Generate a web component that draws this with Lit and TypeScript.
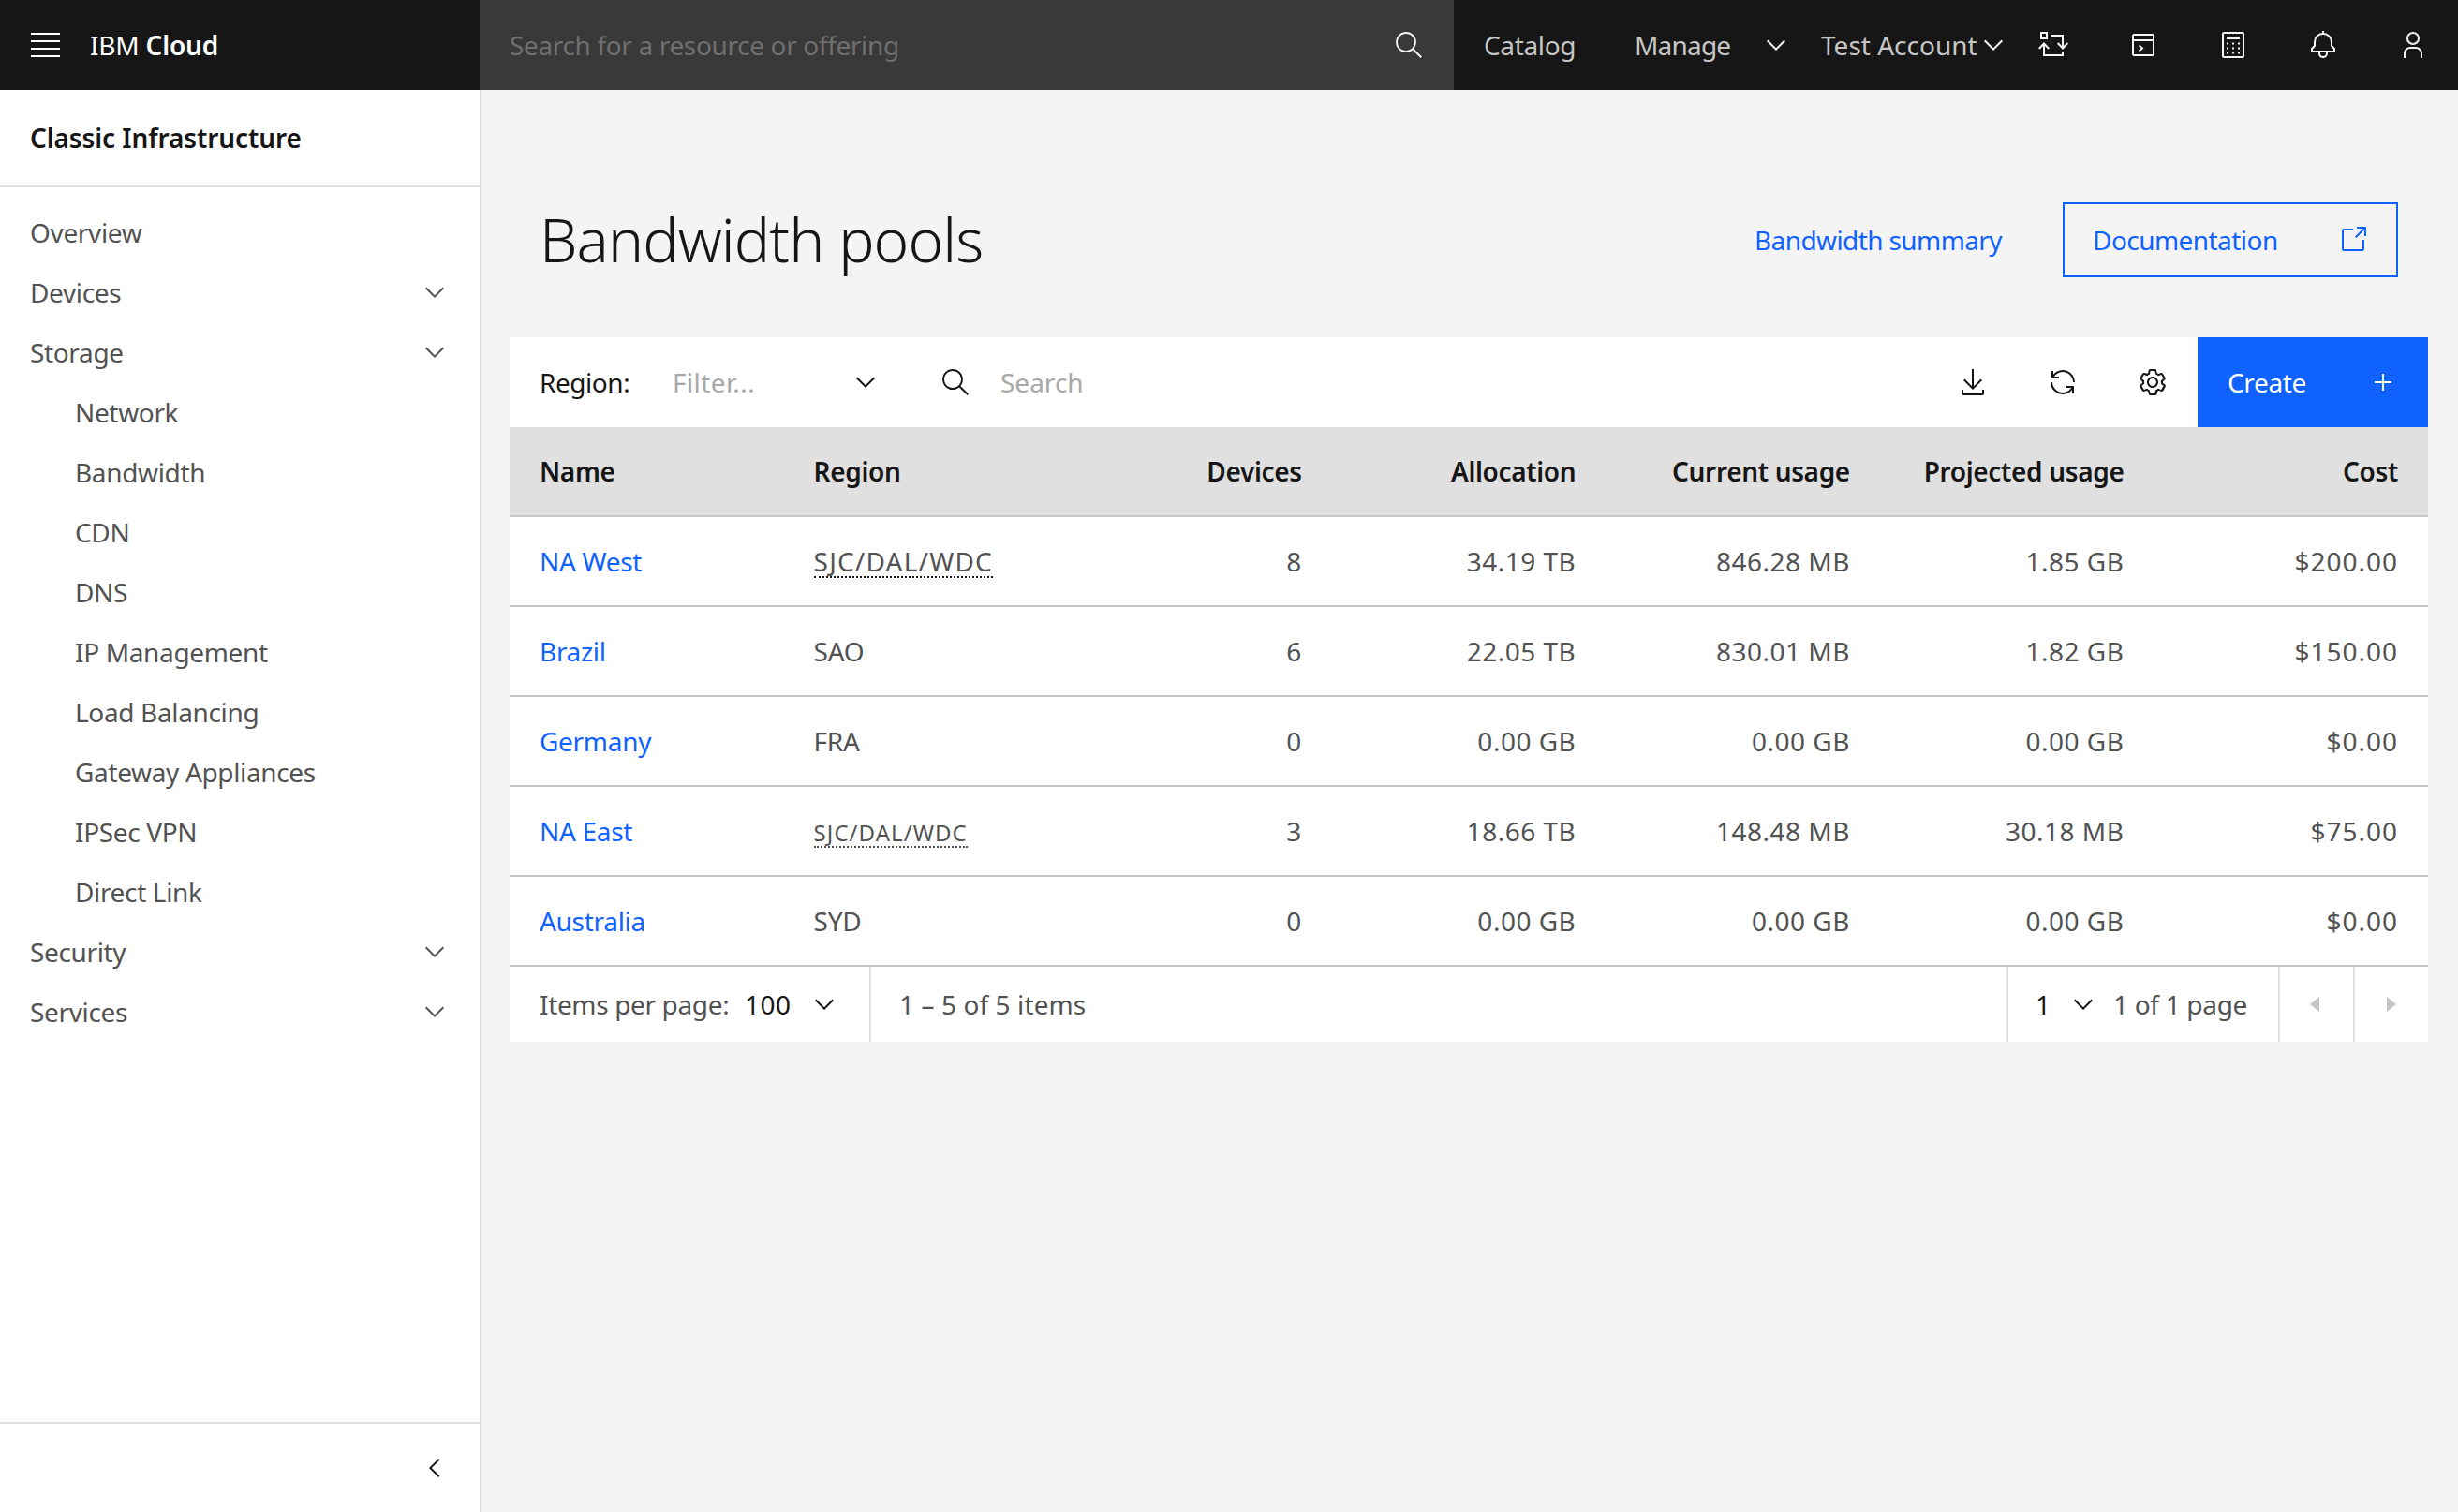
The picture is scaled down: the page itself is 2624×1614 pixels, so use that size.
import { css, html, LitElement, svg } from "lit";
import { customElement } from "lit/decorators.js";

const chevronDown = svg`<path d="M16 22L6 12l1.4-1.4 8.6 8.6 8.6-8.6L26 12z"></path>`;
const chevronLeft = svg`<path d="M10 16l10-10 1.4 1.4L12.8 16l8.6 8.6L20 26z"></path>`;
const search = svg`<path d="M30 28.6L21.4 20c3.8-4.6 3.2-11.6-1.4-15.4S8.4 1.4 4.6 6 1.4 17.6 6 21.4c4 3.4 10 3.4 14 0l8.6 8.6 1.4-1.4zM4 13C4 8 8 4 13 4s9 4 9 9-4 9-9 9-9-4-9-9z"></path>`;
const launch = svg`<path d="M26 28H6c-1.2 0-2-.8-2-2V6c0-1.2.8-2 2-2h10v2H6v20h20V16h2v10c0 1.2-.8 2-2 2z"></path><path d="M20 2v2h6.6L18 12.6l1.4 1.4L28 5.4V12h2V2z"></path>`;
const download = svg`<path d="M26 14l-1.4-1.4-7.6 7.6V2h-2v18.2l-7.6-7.6L6 14l10 10z"></path><path d="M26 24v4H6v-4H4v4c0 1.2.8 2 2 2h20c1.2 0 2-.8 2-2v-4z"></path>`;
const renew = svg`<path d="M12 10H6.78A11 11 0 0 1 27 16h2A13 13 0 0 0 6 7.68V4H4v8h8z"></path><path d="M20 22h5.22A11 11 0 0 1 5 16H3a13 13 0 0 0 23 8.32V28h2v-8h-8z"></path>`;
const settings = svg`<g transform="scale(2)"><path d="M13.5,8.4c0-0.1,0-0.3,0-0.4c0-0.1,0-0.3,0-0.4l1-0.8c0.4-0.3,0.4-0.9,0.2-1.3l-1.2-2C13.3,3.2,13,3,12.6,3c-0.1,0-0.2,0-0.3,0.1l-1.2,0.4c-0.2-0.1-0.4-0.3-0.7-0.4l-0.3-1.3C10.1,1.3,9.7,1,9.2,1H6.8c-0.5,0-0.9,0.3-1,0.8L5.6,3.1C5.3,3.2,5.1,3.3,4.9,3.4L3.7,3C3.6,3,3.5,3,3.4,3C3,3,2.7,3.2,2.5,3.5l-1.2,2C1.1,5.9,1.2,6.4,1.6,6.8l0.9,0.9c0,0.1,0,0.3,0,0.4c0,0.1,0,0.3,0,0.4l-1,0.8c-0.4,0.3-0.5,0.9-0.2,1.3l1.2,2C2.7,12.8,3,13,3.4,13c0.1,0,0.2,0,0.3-0.1l1.2-0.4c0.2,0.1,0.4,0.3,0.7,0.4l0.3,1.3c0.1,0.5,0.5,0.8,1,0.8h2.4c0.5,0,0.9-0.3,1-0.8l0.3-1.3c0.2-0.1,0.4-0.2,0.7-0.4l1.2,0.4c0.1,0,0.2,0.1,0.3,0.1c0.4,0,0.7-0.2,0.9-0.5l1.1-2c0.2-0.4,0.2-0.9-0.2-1.2L13.5,8.4z M12.6,12l-1.7-0.6c-0.4,0.3-0.9,0.6-1.4,0.8L9.2,14H6.8l-0.4-1.8c-0.5-0.2-0.9-0.5-1.4-0.8L3.4,12l-1.2-2l1.4-1.2c-0.1-0.5-0.1-1.1,0-1.6L2.2,6l1.2-2l1.7,0.6C5.5,4.2,6,4,6.5,3.8L6.8,2h2.4l0.4,1.8c0.5,0.2,0.9,0.5,1.4,0.8L12.6,4l1.2,2l-1.4,1.2c0.1,0.5,0.1,1.1,0,1.6l1.4,1.2L12.6,12z"></path><path d="M8,11c-1.7,0-3-1.3-3-3s1.3-3,3-3s3,1.3,3,3C11,9.6,9.7,11,8,11z M8,6C6.9,6,6,6.9,6,8c0,1.1,0.9,2,2,2c1.1,0,2-0.9,2-2C10,6.9,9.1,6,8,6z"></path></g>`;
const add = svg`<path d="M17 15V7h-2v8H7v2h8v8h2v-8h8v-2z"></path>`;
const caretLeft = svg`<path d="M20 24L10 16 20 8z"></path>`;
const caretRight = svg`<path d="M12 8l10 8-10 8z"></path>`;
const menu = svg`<path d="M1 3h31v2H1zM1 11h31v2H1zM1 19h31v2H1zM1 27h31v2H1z"></path>`;
const transfer = svg`<g class="line"><rect x="3" y="3" width="6" height="6"></rect><path d="M13 6h13v13M20.700 14l5.300 5.500 5.300-5.500M.8 20l5.200-5.500 5.200 5.500M6 15v12h20v-4"></path></g>`;
const terminal = svg`<g class="line"><rect x="5" y="5" width="22" height="22" rx="1"></rect><path d="M5 11h22M11.500 16.500l3.500 3-3.500 3"></path></g>`;
const calculator = svg`<rect class="line" x="5" y="3" width="22" height="26" rx="1"></rect><path d="M9 7h14v3H9zM9 13.500h2v2H9zM15 13.500h2v2h-2zM21 13.500h2v2h-2zM9 18.500h2v2H9zM15 18.500h2v2h-2zM21 18.500h2v2h-2zM9 23.500h2v2H9zM15 23.500h2v2h-2zM21 23.500h2v2h-2z"></path>`;
const bell = svg`<path d="M28.7071,19.293,26,16.5859V13a10.0136,10.0136,0,0,0-9-9.9492V1H15V3.0508A10.0136,10.0136,0,0,0,6,13v3.5859L3.2929,19.293A1,1,0,0,0,3,20v3a1,1,0,0,0,1,1h7v.7768a5.152,5.152,0,0,0,4.5,5.1987A5.0057,5.0057,0,0,0,21,25V24h7a1,1,0,0,0,1-1V20A1,1,0,0,0,28.7071,19.293ZM19,25a3,3,0,0,1-6,0V24h6Zm8-3H5V20.4141L7.707,17.707A1,1,0,0,0,8,17V13a8,8,0,0,1,16,0v4a1,1,0,0,0,.293.707L27,20.4141Z"></path>`;
const user = svg`<path d="M16,4a5,5,0,1,1-5,5,5,5,0,0,1,5-5m0-2a7,7,0,1,0,7,7A7,7,0,0,0,16,2Z"></path><path d="M26,30H24V25a5,5,0,0,0-5-5H13a5,5,0,0,0-5,5v5H6V25a7,7,0,0,1,7-7h6a7,7,0,0,1,7,7Z"></path>`;

const icon = (body: unknown) =>
	html`<svg class="icon" viewBox="0 0 32 32" aria-hidden="true">${body}</svg>`;

const sideItems = [
	{ label: "Overview" },
	{ label: "Devices", more: true },
	{ label: "Storage", more: true },
	{ label: "Network", sub: true },
	{ label: "Bandwidth", sub: true },
	{ label: "CDN", sub: true },
	{ label: "DNS", sub: true },
	{ label: "IP Management", sub: true },
	{ label: "Load Balancing", sub: true },
	{ label: "Gateway Appliances", sub: true },
	{ label: "IPSec VPN", sub: true },
	{ label: "Direct Link", sub: true },
	{ label: "Security", more: true },
	{ label: "Services", more: true },
];

const columns = ["Name", "Region", "Devices", "Allocation", "Current usage", "Projected usage", "Cost"];

const rows = [
	{ name: "NA West", region: "SJC/DAL/WDC", hint: "big", cells: ["8", "34.19 TB", "846.28 MB", "1.85 GB", "$200.00"] },
	{ name: "Brazil", region: "SAO", hint: "", cells: ["6", "22.05 TB", "830.01 MB", "1.82 GB", "$150.00"] },
	{ name: "Germany", region: "FRA", hint: "", cells: ["0", "0.00 GB", "0.00 GB", "0.00 GB", "$0.00"] },
	{ name: "NA East", region: "SJC/DAL/WDC", hint: "small", cells: ["3", "18.66 TB", "148.48 MB", "30.18 MB", "$75.00"] },
	{ name: "Australia", region: "SYD", hint: "", cells: ["0", "0.00 GB", "0.00 GB", "0.00 GB", "$0.00"] },
];

@customElement("app-root")
export class AppRoot extends LitElement {
	static override styles = css`
		:host {
			display: block;
			min-height: 1614px;
			background: #f4f4f4;
			color: #161616;
			font-family: "Noto Sans", "Liberation Sans", sans-serif;
			font-size: 28px;
			letter-spacing: -0.35px;
			white-space: nowrap;
		}

		.icon {
			width: 32px;
			height: 32px;
			flex: none;
			fill: currentColor;
			display: block;
		}

		.line {
			fill: none;
			stroke: currentColor;
			stroke-width: 2;
		}

		/* top bar */
		.topbar {
			display: flex;
			height: 96px;
			background: #161616;
			color: #c6c6c6;
		}

		.brand {
			width: 512px;
			display: flex;
			align-items: center;
			gap: 32px;
			padding-left: 32px;
			box-sizing: border-box;
			color: #fff;
			letter-spacing: -0.2px;
		}

		.brand b {
			font-weight: 600;
		}

		.global-search {
			width: 1040px;
			background: #393939;
			display: flex;
			align-items: center;
			justify-content: space-between;
			padding: 0 32px;
			box-sizing: border-box;
			color: #6f6f6f;
		}

		.global-search .icon {
			color: #f4f4f4;
		}

		.nav-item {
			display: flex;
			align-items: center;
			justify-content: space-between;
			box-sizing: border-box;
		}

		.nav-item .icon {
			color: #f4f4f4;
		}

		.catalog {
			width: 193px;
			padding-left: 32px;
		}

		.manage {
			width: 199px;
			padding-right: 32px;
			letter-spacing: -0.8px;
		}

		.account {
			width: 200px;
			letter-spacing: 0;
		}

		.top-icon {
			width: 96px;
			display: flex;
			align-items: center;
			justify-content: center;
			color: #f4f4f4;
		}

		/* page */
		.body {
			display: flex;
			min-height: 1518px;
		}

		.sidebar {
			width: 514px;
			flex: none;
			box-sizing: border-box;
			background: #fff;
			border-right: 2px solid #e0e0e0;
			display: flex;
			flex-direction: column;
			color: #525252;
		}

		.side-title {
			height: 104px;
			box-sizing: border-box;
			border-bottom: 2px solid #e0e0e0;
			display: flex;
			align-items: center;
			padding: 0 32px;
			font-weight: 600;
			color: #161616;
			letter-spacing: -0.1px;
		}

		.side-nav {
			flex: 1;
			padding-top: 16px;
		}

		.side-item {
			height: 64px;
			display: flex;
			align-items: center;
			justify-content: space-between;
			padding: 0 32px;
		}

		.side-item.sub {
			padding-left: 80px;
		}

		.side-foot {
			height: 94px;
			border-top: 2px solid #e0e0e0;
			display: flex;
			align-items: center;
			justify-content: flex-end;
			padding-right: 32px;
			color: #161616;
		}

		.main {
			flex: 1;
			min-width: 0;
			padding: 120px 32px 0 30px;
		}

		.title-row {
			height: 80px;
			display: flex;
			align-items: center;
			padding: 0 32px;
			margin-bottom: 64px;
		}

		h1 {
			margin: 0;
			flex: 1;
			font-size: 64px;
			font-weight: 300;
			letter-spacing: -0.9px;
			line-height: 80px;
		}

		.link {
			color: #0f62fe;
			text-decoration: none;
		}

		.title-row .link {
			margin-right: 65px;
			letter-spacing: -0.6px;
		}

		.doc-button {
			width: 358px;
			height: 80px;
			box-sizing: border-box;
			border: 2px solid #0f62fe;
			color: #0f62fe;
			display: flex;
			align-items: center;
			justify-content: space-between;
			padding: 0 30px;
			letter-spacing: -0.55px;
		}

		/* table */
		.toolbar {
			height: 96px;
			background: #fff;
			display: flex;
			align-items: center;
			padding-left: 32px;
		}

		.region-label {
			width: 142px;
			letter-spacing: -0.45px;
		}

		.filter {
			width: 222px;
			display: flex;
			align-items: center;
			justify-content: space-between;
			color: #a8a8a8;
			letter-spacing: 0.4px;
		}

		.filter .icon {
			color: #161616;
		}

		.table-search {
			margin-left: 64px;
			display: flex;
			align-items: center;
			gap: 32px;
			color: #a8a8a8;
			flex: 1;
			letter-spacing: 0;
		}

		.table-search .icon {
			color: #161616;
		}

		.tool {
			width: 96px;
			height: 96px;
			display: flex;
			align-items: center;
			justify-content: center;
		}

		.create {
			width: 246px;
			height: 96px;
			box-sizing: border-box;
			background: #0f62fe;
			color: #fff;
			display: flex;
			align-items: center;
			justify-content: space-between;
			padding: 0 32px;
		}

		.row {
			display: grid;
			grid-template-columns: repeat(7, 1fr);
			height: 96px;
			box-sizing: border-box;
			background: #fff;
			border-bottom: 2px solid #c6c6c6;
			color: #525252;
			align-items: center;
		}

		.row.head {
			background: #e0e0e0;
			color: #161616;
			font-weight: 600;
		}

		.cell {
			padding: 0 32px;
			text-align: right;
			letter-spacing: 0.5px;
		}

		.cell:last-child {
			letter-spacing: 1px;
		}

		.row.head .cell {
			letter-spacing: -0.35px;
		}

		.cell.left {
			text-align: left;
			letter-spacing: -0.3px;
		}

		.hint {
			border-bottom: 2px dotted #161616;
			display: inline-block;
			line-height: 32px;
			letter-spacing: 1.2px;
		}

		.hint.small {
			font-size: 24px;
			border-bottom-color: #525252;
			line-height: 28px;
			letter-spacing: 1.05px;
		}

		.pager {
			height: 80px;
			background: #fff;
			display: flex;
			color: #525252;
		}

		.pager-section {
			display: flex;
			align-items: center;
			box-sizing: border-box;
		}

		.per-page {
			width: 386px;
			padding-left: 32px;
			border-right: 2px solid #e0e0e0;
		}

		.per-page .label {
			width: 219px;
		}

		.value {
			color: #161616;
			letter-spacing: 0.5px;
		}

		.per-page .value {
			width: 69px;
		}

		.per-page .icon,
		.pages .icon {
			color: #161616;
		}

		.range {
			flex: 1;
			padding-left: 30px;
			letter-spacing: 0.1px;
		}

		.pages {
			width: 290px;
			border-left: 2px solid #e0e0e0;
			padding-left: 29px;
		}

		.pages .value {
			width: 35px;
		}

		.pages .label {
			margin-left: 16px;
			letter-spacing: -0.3px;
		}

		.step {
			width: 80px;
			border-left: 2px solid #e0e0e0;
			justify-content: center;
			padding-right: 2px;
		}

		.step .icon {
			color: #c6c6c6;
		}
	`;

	override render() {
		return html`
			<header class="topbar">
				<div class="brand">
					${icon(menu)}
					<span>IBM <b>Cloud</b></span>
				</div>
				<div class="global-search">
					<span>Search for a resource or offering</span>
					${icon(search)}
				</div>
				<div class="nav-item catalog">Catalog</div>
				<div class="nav-item manage">Manage ${icon(chevronDown)}</div>
				<div class="nav-item account">Test Account ${icon(chevronDown)}</div>
				${[transfer, terminal, calculator, bell, user].map(
					(i) => html`<div class="top-icon">${icon(i)}</div>`
				)}
			</header>
			<div class="body">
				<aside class="sidebar">
					<div class="side-title">Classic Infrastructure</div>
					<nav class="side-nav">
						${sideItems.map(
							(item) => html`
								<div class="side-item ${item.sub ? "sub" : ""}">
									<span>${item.label}</span>
									${item.more ? icon(chevronDown) : ""}
								</div>
							`
						)}
					</nav>
					<div class="side-foot">${icon(chevronLeft)}</div>
				</aside>
				<main class="main">
					<div class="title-row">
						<h1>Bandwidth pools</h1>
						<a class="link">Bandwidth summary</a>
						<div class="doc-button"><span>Documentation</span>${icon(launch)}</div>
					</div>
					<div class="toolbar">
						<span class="region-label">Region:</span>
						<div class="filter"><span>Filter...</span>${icon(chevronDown)}</div>
						<div class="table-search">${icon(search)}<span>Search</span></div>
						${[download, renew, settings].map((i) => html`<div class="tool">${icon(i)}</div>`)}
						<div class="create"><span>Create</span>${icon(add)}</div>
					</div>
					<div class="row head">
						${columns.map(
							(c, i) => html`<div class="cell ${i < 2 ? "left" : ""}">${c}</div>`
						)}
					</div>
					${rows.map(
						(r) => html`
							<div class="row">
								<div class="cell left"><a class="link">${r.name}</a></div>
								<div class="cell left">
									${r.hint
										? html`<span class="hint ${r.hint}">${r.region}</span>`
										: r.region}
								</div>
								${r.cells.map((c) => html`<div class="cell">${c}</div>`)}
							</div>
						`
					)}
					<div class="pager">
						<div class="pager-section per-page">
							<span class="label">Items per page:</span>
							<span class="value">100</span>
							${icon(chevronDown)}
						</div>
						<div class="pager-section range">1 – 5 of 5 items</div>
						<div class="pager-section pages">
							<span class="value">1</span>
							${icon(chevronDown)}
							<span class="label">1 of 1 page</span>
						</div>
						<div class="pager-section step">${icon(caretLeft)}</div>
						<div class="pager-section step">${icon(caretRight)}</div>
					</div>
				</main>
			</div>
		`;
	}
}
